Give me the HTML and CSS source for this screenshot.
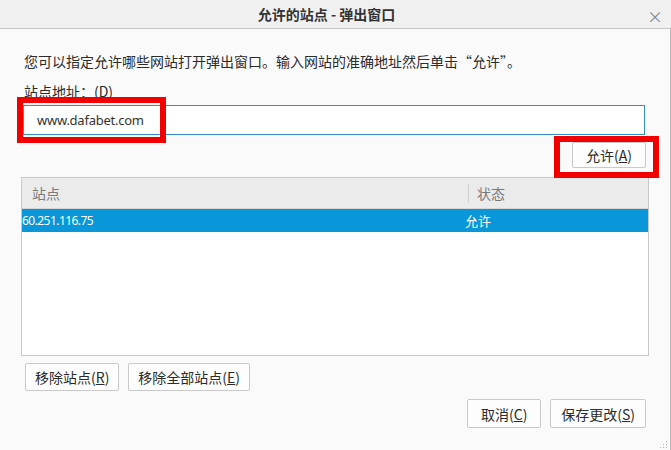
FILE: index.html
```html
<!DOCTYPE html>
<html lang="zh-CN">

<head>
    <meta charset="UTF-8">
    <meta name="viewport" content="width=device-width, initial-scale=1.0">
    <title>允许的站点 - 弹出窗口</title>
    <link rel="stylesheet" href="styles.css">
</head>

<body>
    <div class="janela">
        <div class="barra-titulo">
            <span class="titulo">允许的站点 - 弹出窗口</span>
            <span class="fechar">&#215;</span>
        </div>

        <div class="conteudo">
            <p class="intro">您可以指定允许哪些网站打开弹出窗口。输入网站的准确地址然后单击“允许”。</p>
            <label class="rotulo" for="endereco">站点地址：(D)</label>
            <input type="text" id="endereco" class="campo" value="www.dafabet.com">

            <div class="linha-direita">
                <button class="botao">允许(<u>A</u>)</button>
            </div>

            <div class="lista">
                <div class="cabecalho">
                    <div class="col-site">站点</div>
                    <div class="col-estado">状态</div>
                </div>
                <div class="item selecionado">
                    <div class="col-site">60.251.116.75</div>
                    <div class="col-estado">允许</div>
                </div>
            </div>

            <div class="linha-esquerda">
                <button class="botao">移除站点(<u>R</u>)</button>
                <button class="botao">移除全部站点(<u>E</u>)</button>
            </div>

            <div class="linha-direita rodape">
                <button class="botao">取消(<u>C</u>)</button>
                <button class="botao">保存更改(<u>S</u>)</button>
            </div>
        </div>

        <div class="marca marca-campo"></div>
        <div class="marca marca-botao"></div>

        <svg class="pega" width="8" height="8" viewBox="0 0 8 8">
            <rect x="6" y="0" width="1" height="1" fill="#b5b5b5" />
            <rect x="3" y="3" width="1" height="1" fill="#b5b5b5" />
            <rect x="6" y="3" width="1" height="1" fill="#b5b5b5" />
            <rect x="0" y="6" width="1" height="1" fill="#b5b5b5" />
            <rect x="3" y="6" width="1" height="1" fill="#b5b5b5" />
            <rect x="6" y="6" width="1" height="1" fill="#b5b5b5" />
        </svg>
    </div>
</body>

</html>
```

FILE: styles.css
```css
html,
body {
    margin: 0;
    padding: 0;
    background-color: #fafafa;
}

body {
    font-family: "Noto Sans CJK SC", "Noto Sans", sans-serif;
    font-size: 14px;
    color: #2b2b2b;
}

.janela {
    position: relative;
    width: 671px;
    height: 450px;
    display: flex;
    flex-direction: column;
    overflow: hidden;
}

.barra-titulo {
    height: 28px;
    background-color: #f0f0f0;
    border-bottom: 1px solid #c6c6c6;
    display: flex;
    align-items: center;
    justify-content: center;
    position: relative;
    padding-right: 18px;
}

.titulo {
    font-weight: bold;
    font-size: 14px;
    color: #333;
}

.fechar {
    position: absolute;
    right: 8px;
    top: 4px;
    font-size: 16px;
    color: #8a8a8a;
}

.conteudo {
    flex: 1;
    display: flex;
    flex-direction: column;
    padding: 0 21px 0 21px;
    border-right: 1px solid #b8b8b8;
}

.intro {
    margin: 22px 0 0 3px;
    line-height: 20px;
}

.rotulo {
    display: block;
    margin: 10px 0 0 3px;
    line-height: 20px;
}

.campo {
    margin: 4px 4px 0 2px;
    height: 30px;
    box-sizing: border-box;
    border: 1px solid #2f8fc6;
    background-color: #fff;
    padding: 0 13px;
    font-family: "Noto Sans", sans-serif;
    font-size: 13px;
    letter-spacing: -0.25px;
    color: #333;
    outline: none;
}

.linha-direita {
    display: flex;
    justify-content: flex-end;
    gap: 9px;
    margin: 7px 3px 0 0;
}

.linha-esquerda {
    display: flex;
    gap: 9px;
    margin: 7px 0 0 4px;
}

.botao {
    font-family: "Noto Sans CJK SC", "Noto Sans", sans-serif;
    font-size: 14px;
    color: #2b2b2b;
    background-color: #fdfdfd;
    border: 1px solid #c9c9c9;
    border-radius: 2px;
    height: 26px;
    padding: 0 9px;
    line-height: 22px;
}

.linha-direita .botao {
    min-width: 74px;
}

.linha-esquerda .botao {
    height: 28px;
}

.rodape {
    margin-top: 8px;
}

.rodape .botao {
    height: 29px;
    padding: 0 10px;
}

.lista {
    margin-top: 9px;
    height: 179px;
    box-sizing: border-box;
    border: 1px solid #c8c8c8;
    background-color: #fff;
}

.cabecalho {
    display: flex;
    height: 30px;
    align-items: center;
    background-color: #ebebeb;
    border-bottom: 1px solid #d6d6d6;
    color: #7a7a7a;
}

.cabecalho .col-site {
    width: 436px;
    padding-left: 10px;
}

.cabecalho .col-estado {
    border-left: 1px solid #cfcfcf;
    padding-left: 8px;
    line-height: 19px;
}

.item {
    display: flex;
    height: 23px;
    align-items: center;
    font-size: 13px;
}

.item .col-site {
    width: 443px;
    font-family: "Noto Sans", sans-serif;
    font-size: 12px;
    letter-spacing: -0.55px;
}

.selecionado {
    background-color: #0997da;
    color: #fff;
}

.marca {
    position: absolute;
    border: 6px solid #f20000;
    box-sizing: border-box;
}

.marca-campo {
    left: 17px;
    top: 97px;
    width: 149px;
    height: 46px;
}

.marca-botao {
    left: 554px;
    top: 136px;
    width: 105px;
    height: 42px;
}

.pega {
    position: absolute;
    right: 3px;
    bottom: 1px;
}
```
